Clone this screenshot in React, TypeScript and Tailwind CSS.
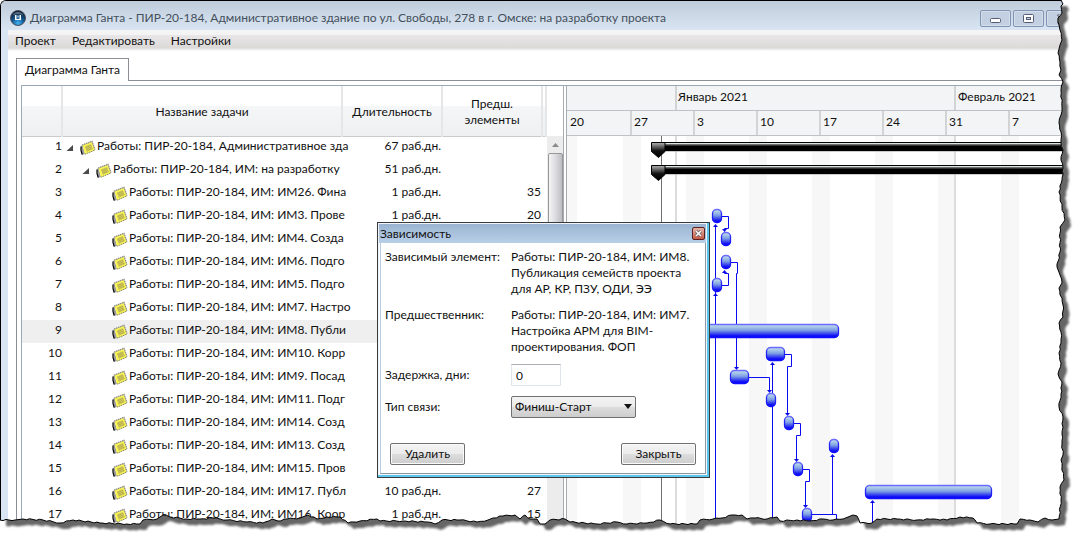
import { useId } from "react";

type Task = {
  id: number;
  name: string;
  level: number;
  duration?: string;
  predecessors?: string;
};

const tasks: Task[] = [
  { id: 1, level: 0, name: "Работы: ПИР-20-184, Административное зда", duration: "67 раб.дн." },
  { id: 2, level: 1, name: "Работы: ПИР-20-184, ИМ: на разработку", duration: "51 раб.дн." },
  { id: 3, level: 2, name: "Работы: ПИР-20-184, ИМ: ИМ26. Фина", duration: "1 раб.дн.", predecessors: "35" },
  { id: 4, level: 2, name: "Работы: ПИР-20-184, ИМ: ИМ3. Прове", duration: "1 раб.дн.", predecessors: "20" },
  { id: 5, level: 2, name: "Работы: ПИР-20-184, ИМ: ИМ4. Созда" },
  { id: 6, level: 2, name: "Работы: ПИР-20-184, ИМ: ИМ6. Подго" },
  { id: 7, level: 2, name: "Работы: ПИР-20-184, ИМ: ИМ5. Подго" },
  { id: 8, level: 2, name: "Работы: ПИР-20-184, ИМ: ИМ7. Настро" },
  { id: 9, level: 2, name: "Работы: ПИР-20-184, ИМ: ИМ8. Публи" },
  { id: 10, level: 2, name: "Работы: ПИР-20-184, ИМ: ИМ10. Корр" },
  { id: 11, level: 2, name: "Работы: ПИР-20-184, ИМ: ИМ9. Посад" },
  { id: 12, level: 2, name: "Работы: ПИР-20-184, ИМ: ИМ11. Подг" },
  { id: 13, level: 2, name: "Работы: ПИР-20-184, ИМ: ИМ14. Созд" },
  { id: 14, level: 2, name: "Работы: ПИР-20-184, ИМ: ИМ13. Созд" },
  { id: 15, level: 2, name: "Работы: ПИР-20-184, ИМ: ИМ15. Пров" },
  { id: 16, level: 2, name: "Работы: ПИР-20-184, ИМ: ИМ17. Публ", duration: "10 раб.дн.", predecessors: "27" },
  { id: 17, level: 2, name: "Работы: ПИР-20-184, ИМ: ИМ16. Коор", duration: "1 раб.дн.", predecessors: "15" },
];

const SELECTED_TASK = 9;
const ROW = 23;

const indent = ["pl-1", "pl-5", "pl-9"];

const weeks = ["20", "27", "3", "10", "17", "24", "31", "7"];

// [row, x, width] in chart coordinates
const bars = [
  [4, 145, 9],
  [5, 154, 9],
  [6, 154, 9],
  [7, 145, 9],
  [9, 118, 153],
  [10, 199, 18],
  [11, 163, 18],
  [12, 199, 9],
  [13, 217, 9],
  [14, 262, 9],
  [15, 226, 9],
  [16, 298, 126],
  [17, 235, 9],
];

const links = [
  "M154 80.5h7.5v12h-4v3",
  "M148.5 89v298",
  "M154 149.5h7.5v-12h-4v-2",
  "M163 126.5h7.5v11h-1v95",
  "M181 241.5h21.5v14",
  "M205.5 387v-160",
  "M217 218.5h7.5v12h-4v48",
  "M226 287.5h7.5v12h-4v25",
  "M235 333.5h7.5v12h-4v25",
  "M244 378.5h25.5v8",
  "M265.5 378v-59",
  "M305.5 387v-22",
];

// [x, y] of the arrow tips
const arrowsDown = [[157.5, 96], [169.5, 234], [202.5, 257], [220.5, 280], [229.5, 326], [238.5, 372]];
const arrowsUp = [[148.5, 88], [148.5, 157], [157.5, 134], [205.5, 226], [265.5, 318], [305.5, 364]];

const rightEdge = [
  [1061, 0], [1063, 4], [1061, 6], [1062, 13], [1058, 18], [1059, 25], [1060, 30], [1062, 40], [1060, 45], [1058, 53],
  [1060, 62], [1061, 70], [1059, 75], [1063, 82], [1061, 90], [1062, 107], [1061, 115], [1059, 123], [1061, 132],
  [1061, 143], [1063, 150], [1061, 160], [1063, 168], [1062, 180], [1059, 192], [1062, 207], [1065, 220], [1060, 227],
  [1060, 252], [1057, 267], [1060, 275], [1062, 283], [1059, 288], [1063, 305], [1063, 317], [1059, 323], [1061, 332],
  [1061, 343], [1059, 353], [1061, 363], [1058, 374], [1062, 382], [1061, 394], [1059, 407], [1063, 417], [1062, 434],
  [1062, 444], [1063, 455], [1061, 460], [1064, 480], [1060, 487], [1061, 500], [1059, 519],
];

const bottomEdge = [
  [1052, 520], [1045, 518], [1038, 522], [1030, 520], [1020, 519], [1017, 524], [990, 524], [977, 523], [973, 518],
  [960, 517], [947, 520], [933, 519], [917, 520], [897, 519], [877, 519], [872, 523], [860, 523], [857, 516], [853, 515],
  [848, 517], [843, 519], [833, 520], [823, 519], [810, 521], [797, 520], [780, 521], [777, 517], [767, 519], [755, 518],
  [747, 519], [742, 515], [732, 515], [722, 518], [713, 519], [700, 520], [697, 524], [670, 524], [660, 520], [647, 523],
  [627, 524], [617, 522], [597, 524], [570, 522], [565, 519], [550, 520], [545, 524], [540, 524], [537, 519], [530, 519],
  [525, 515], [520, 519], [515, 515], [503, 516], [493, 518], [488, 520], [477, 522], [460, 520], [442, 520], [435, 524],
  [427, 522], [403, 521], [380, 521], [377, 519], [360, 521], [348, 523], [340, 517], [327, 517], [317, 519], [308, 515],
  [300, 518], [287, 519], [278, 521], [272, 519], [263, 523], [247, 522], [227, 520], [213, 518], [200, 519], [187, 519],
  [170, 517], [163, 515], [157, 519], [143, 520], [140, 524], [127, 524], [100, 523], [73, 520], [60, 523], [43, 520],
  [23, 519], [15, 520], [0, 520],
];

// Adds small teeth between the points of a torn edge
const roughen = (points: number[][], vertical: boolean) => {
  const out: number[][] = [];
  points.forEach(([x, y], i) => {
    out.push([x, y]);
    const next = points[i + 1];
    if (!next) return;
    const steps = Math.floor(Math.hypot(next[0] - x, next[1] - y) / 3);
    for (let k = 1; k < steps; k++) {
      const t = k / steps;
      const tooth = (((i * 7 + k * 5) % 3) - 1) * 0.6;
      out.push([
        x + (next[0] - x) * t + (vertical ? tooth : 0),
        y + (next[1] - y) * t + (vertical ? 0 : tooth),
      ]);
    }
  });
  return out;
};

const torn = [...roughen(rightEdge, true), ...roughen(bottomEdge, false)].map((p) => p.join(" ")).join("L");

const TornEdge = () => {
  const id = useId();
  const outside = `M0 537H1077V0H1061L${torn}Z`;
  return (
    <svg
      className="pointer-events-none absolute inset-0 z-20 h-full w-full"
      viewBox="0 0 1077 537"
      preserveAspectRatio="none"
      aria-hidden="true"
    >
      <defs>
        <clipPath id={`${id}-out`}>
          <path d={outside} />
        </clipPath>
        <filter id={`${id}-soft`}>
          <feGaussianBlur stdDeviation="1.2" />
        </filter>
      </defs>
      <path d={outside} fill="#fff" />
      <g clipPath={`url(#${id}-out)`}>
        <path
          d={`M2 2L${torn}Z`}
          transform="translate(6 6)"
          fill="#666"
          filter={`url(#${id}-soft)`}
        />
      </g>
      <path d={`M${torn}`} fill="none" stroke="#000" />
    </svg>
  );
};

const AppIcon = () => (
  <svg className="h-4 w-4 shrink-0" viewBox="0 0 16 16" aria-hidden="true">
    <defs>
      <radialGradient id="appIcon" cx="50%" cy="85%" r="80%">
        <stop offset="0" stopColor="#3fb4f5" />
        <stop offset="0.5" stopColor="#15558f" />
        <stop offset="1" stopColor="#0a1a2e" />
      </radialGradient>
    </defs>
    <circle cx="8" cy="8" r="7.5" fill="url(#appIcon)" stroke="#4a5260" />
    <path d="M2.5 5.5a6 6 0 0 1 11 0 12 12 0 0 0-11 0z" fill="#8b98a8" opacity="0.6" />
    <path d="M5 5h1.500v5H5zM9.500 5H11v5H9.500zM5 9h6v1H5zM7.500 5.500h1v2h-1z" fill="#fff" />
  </svg>
);

const NoteIcon = () => (
  <svg className="h-4 w-4 shrink-0" viewBox="0 0 16 16" aria-hidden="true">
    <path d="M1 6L2.500 5 5 14 2 15z" fill="#9a9a9a" />
    <path d="M1 6.500v4l1.200 4" fill="none" stroke="#000" strokeWidth="1.200" />
    <path d="M2.500 5L12 1.500 15 9.800 5 14z" fill="#fbf650" />
    <path d="M2 5.200L12 1.300 15 9.800" fill="none" stroke="#8f8f8f" strokeWidth="1.300" strokeDasharray="1.600 .5" />
    <path d="M4.800 6.400L10.800 4.100 12.800 9.200 6.600 11.700z" fill="#cfc85a" />
    <path d="M5.500 7.500l5.600-2.200M6.200 9l5.600-2.200M6.800 10.500l5.600-2.200" stroke="#b0a94a" strokeWidth=".7" />
    <path d="M5 14.200l10-4.200" stroke="#8c8c54" strokeDasharray="1.600 .5" />
  </svg>
);

const windowButton =
  "flex h-[17px] w-[31px] items-center justify-center rounded-xs border border-[#8294b3] bg-[#c3d0e1] shadow-[inset_0_0_0_1px_#d3deea]";

const TitleBar = () => (
  <header className="flex h-[29px] shrink-0 items-start bg-linear-to-b from-[#bfccdb] to-[#d9e5f2]">
    <div className="flex h-full flex-1 items-center gap-1 pt-[5px] pl-[9px]">
      <AppIcon />
      <h1 className="whitespace-nowrap text-[#44505c]">
        Диаграмма Ганта - ПИР-20-184, Административное здание по ул. Свободы, 278 в г. Омске: на разработку проекта
      </h1>
    </div>
    <div className="flex gap-[2px] pt-[9px]">
      <button aria-label="Свернуть" className={windowButton}>
        <svg width="11" height="9" viewBox="0 0 11 9">
          <rect x=".5" y="4.500" width="10" height="4" rx="1" fill="#fff" stroke="#555c74" />
        </svg>
      </button>
      <button aria-label="Развернуть" className={windowButton}>
        <svg width="11" height="9" viewBox="0 0 11 9">
          <rect x=".5" y=".5" width="10" height="8" rx="1" fill="#fff" stroke="#555c74" />
          <rect x="3.500" y="3.500" width="4" height="2" fill="#c3d0e1" stroke="#555c74" />
        </svg>
      </button>
      <button aria-label="Закрыть окно" className={windowButton}>
        <svg width="12" height="10" viewBox="0 0 12 10">
          <path d="M1.500 1h3L6 3l1.500-2h3L8 5l2.500 4h-3L6 7 4.500 9h-3L4 5z" fill="#fff" stroke="#555c74" />
        </svg>
      </button>
    </div>
  </header>
);

const MenuBar = () => (
  <nav className="flex h-[21px] shrink-0 items-center gap-4 bg-[linear-gradient(#f5f5f6_0,#f3f3f4_5px,#e8e6e8_5px,#dcdad8_18px,#fff_21px)] pt-px pl-[7px]">
    <button>Проект</button>
    <button>Редактировать</button>
    <button>Настройки</button>
  </nav>
);

const headCell =
  "h-[50px] border-r-2 border-b border-r-[#e4e6e8] border-b-[#c9cbcd] bg-[linear-gradient(#fff_20px,#f5f6f8_20px,#eff0f2)] p-0 pt-[3px] text-center font-normal align-middle";

const TaskTable = () => (
  <table className="w-[524px] table-fixed border-collapse self-start">
    <colgroup>
      <col className="w-10" />
      <col className="w-[280px]" />
      <col className="w-[100px]" />
      <col className="w-[100px]" />
      <col className="w-1" />
    </colgroup>
    <thead>
      <tr>
        <th className={headCell} aria-label="Номер" />
        <th className={headCell}>Название задачи</th>
        <th className={headCell}>Длительность</th>
        <th className={headCell}>
          Предш.
          <br />
          элементы
        </th>
        <th className={headCell + " border-r-0"} aria-hidden="true" />
      </tr>
    </thead>
    <tbody>
      {tasks.map((task) => (
        <tr key={task.id} className={task.id === SELECTED_TASK ? "h-[23px] bg-[#efefef]" : "h-[23px]"}>
          <td className="p-0 pb-1 text-right">{task.id}</td>
          <td className="p-0">
            <div className={"flex items-center " + indent[task.level]}>
              <span className="flex w-[14px] shrink-0">
                {task.level < 2 && (
                  <svg width="8" height="8" viewBox="0 0 8 8" aria-hidden="true">
                    <path d="M7 1v6H.5z" fill="#4a4a4a" />
                  </svg>
                )}
              </span>
              <NoteIcon />
              <span className="ml-px pb-1 whitespace-nowrap">{task.name}</span>
            </div>
          </td>
          <td className="p-0 pr-px pb-1 text-right">{task.duration}</td>
          <td className="p-0 pr-px pb-1 text-right">{task.predecessors}</td>
          <td />
        </tr>
      ))}
    </tbody>
  </table>
);

const ScrollBar = () => (
  <div className="mt-[50px] flex w-4 shrink-0 flex-col items-center bg-[#ececec]">
    <button aria-label="Вверх" className="flex h-[17px] w-full items-center justify-center">
      <svg width="7" height="4" viewBox="0 0 7 4">
        <path d="M3.500 0L7 4H0z" fill="#8a8a8a" />
      </svg>
    </button>
    <div className="h-36 w-[15px] rounded-xs border border-[#979797] bg-linear-to-r from-[#f4f4f4] via-[#dcdce0] to-[#bcbcc2]" />
  </div>
);

const TimeHeader = () => (
  <div className="bg-[#f3f4f6]">
    <div className="flex h-[25px] items-center border-b border-[#bfc1c4] whitespace-nowrap">
      <div className="h-full w-[110px] shrink-0 border-r-2 border-[#d2d3d5]" />
      <div className="flex h-full w-[279px] shrink-0 items-center border-r-2 border-[#d2d3d5] pb-[3px] pl-px">
        Январь 2021
      </div>
      <div className="pb-[3px] pl-[2px]">Февраль 2021</div>
    </div>
    <div className="flex h-[25px] border-b border-[#bfc1c4]">
      {weeks.map((week, i) => (
        <div
          key={week}
          className={
            i === 0
              ? "flex w-[65px] shrink-0 items-center border-r-2 border-[#d2d3d5] pb-[3px] pl-[3px]"
              : "flex w-[63px] shrink-0 items-center border-r-2 border-[#d2d3d5] pb-[3px] pl-[2px] last:border-r-0"
          }
        >
          {week}
        </div>
      ))}
    </div>
  </div>
);

const SummaryBar = ({ row }: { row: number }) => {
  const y = (row - 1) * ROW + 6;
  return (
    <g>
      <rect x="90" y={y} width="420" height="9" fill="#000" />
      <rect x="98" y={y + 1} width="412" height="1" fill="#d9e4dc" />
      <rect x="98" y={y + 2} width="412" height="1" fill="#6e6e6e" />
      <rect x="98" y={y + 3} width="412" height="1" fill="#333" />
      <rect x="98" y={y + 9} width="412" height="1" fill="#999" opacity="0.500" />
      <path d={`M84.500 ${y + 0.5}h13.500v9l-6.500 6-7-6z`} fill="url(#summary)" stroke="#000" />
    </g>
  );
};

const Chart = () => (
  <svg width="510" height="400" viewBox="0 0 510 400" className="block" role="img" aria-label="Диаграмма">
    <defs>
      <linearGradient id="bar" x1="0" y1="0" x2="0" y2="1">
        <stop offset="0" stopColor="#c6e4ea" />
        <stop offset="0.450" stopColor="#7d9fe4" />
        <stop offset="0.850" stopColor="#1414f4" />
        <stop offset="1" stopColor="#0000ff" />
      </linearGradient>
      <linearGradient id="barEdge" x1="0" y1="0" x2="0" y2="1">
        <stop offset="0" stopColor="#6b6bff" />
        <stop offset="0.300" stopColor="#2c2cf5" />
        <stop offset="1" stopColor="#1010ff" />
      </linearGradient>
      <linearGradient id="summary" x1="0" y1="0" x2="0" y2="1">
        <stop offset="0" stopColor="#b5b5b5" />
        <stop offset="0.550" stopColor="#111" />
        <stop offset="1" stopColor="#000" />
      </linearGradient>
    </defs>
    <rect x="0" y="0" width="10" height="400" fill="#f7f7f7" />
    {[56, 119, 182, 245, 308, 371, 434].map((x) => (
      <rect key={x} x={x} y="0" width="18" height="400" fill="#f7f7f7" />
    ))}
    <rect x="94" y="0" width="1" height="400" fill="#707070" />
    <rect x="108" y="0" width="2" height="400" fill="#dcdcdc" />
    <rect x="387" y="0" width="2" height="400" fill="#dcdcdc" />
    <g fill="none" stroke="#0a0af0">
      {links.map((d) => (
        <path key={d} d={d} />
      ))}
    </g>
    <g fill="#0a0ae6">
      {arrowsDown.map(([x, y]) => (
        <path key={`${x}-${y}`} d={`M${x - 2.5} ${y - 3}h5l-2.500 3z`} />
      ))}
      {arrowsUp.map(([x, y]) => (
        <path key={`${x}-${y}`} d={`M${x - 2.5} ${y + 3}h5l-2.500-3z`} />
      ))}
    </g>
    {bars.map(([row, x, width]) => (
      <rect
        key={row}
        x={x + 0.5}
        y={(row - 1) * ROW + 4.5}
        width={width}
        height="13"
        rx="4"
        fill="url(#bar)"
        stroke="url(#barEdge)"
        strokeWidth="1.300"
      />
    ))}
    <SummaryBar row={1} />
    <SummaryBar row={2} />
  </svg>
);

const dialogButton =
  "h-[22px] w-[75px] rounded-xs border border-[#707070] bg-[linear-gradient(#f3f3f3_0,#ebebeb_50%,#dddddd_50%,#cdcdcd)] leading-4 shadow-[inset_0_0_0_1px_#fafafa]";

const DependencyDialog = () => (
  <div
    role="dialog"
    aria-labelledby="dialog-title"
    className="absolute top-[222px] left-[377px] z-10 w-[333px] border border-[#3a3a3a] bg-[#5cc6ec] pr-[2px] pb-[2px]"
  >
    <div className="border border-[#eef4fa] bg-white">
      <div className="flex h-[19px] items-center justify-between bg-linear-to-b from-[#9ab4d1] to-[#b9cfe8] pr-px pl-px">
        <h2 id="dialog-title">Зависимость</h2>
        <button
          aria-label="Закрыть диалог"
          className="flex h-[13px] w-[13px] items-center justify-center rounded-xs border border-[#5a2020] bg-linear-to-b from-[#e6b4a8] to-[#c65a48]"
        >
          <svg width="7" height="7" viewBox="0 0 7 7">
            <path d="M1 1l5 5M6 1L1 6" stroke="#555" strokeWidth="2.800" />
            <path d="M1 1l5 5M6 1L1 6" stroke="#fff" strokeWidth="1.600" />
          </svg>
        </button>
      </div>
      <form className="ml-px border border-t-0 border-[#8a97a6] border-l-[#b6cbe3] pt-[6px] pb-2 pl-1">
        <dl className="grid grid-cols-[126px_1fr] gap-y-[10px] leading-4">
          <dt>Зависимый элемент:</dt>
          <dd>
            Работы: ПИР-20-184, ИМ: ИМ8.
            <br />
            Публикация семейств проекта
            <br />
            для АР, КР, ПЗУ, ОДИ, ЭЭ
          </dd>
          <dt>Предшественник:</dt>
          <dd>
            Работы: ПИР-20-184, ИМ: ИМ7.
            <br />
            Настройка АРМ для BIM-
            <br />
            проектирования. ФОП
          </dd>
        </dl>
        <div className="mt-[9px] grid grid-cols-[126px_1fr] items-center gap-y-[10px]">
          <label htmlFor="lag">Задержка, дни:</label>
          <input id="lag" defaultValue="0" className="h-[22px] w-[50px] border border-[#e0e4ec] border-t-[#abadb3] px-1" />
          <label htmlFor="link-type">Тип связи:</label>
          <div className="relative w-[125px]">
            <select
              id="link-type"
              className="block h-[22px] w-full appearance-none rounded-xs border border-[#707070] bg-[linear-gradient(#f3f3f3_0,#ebebeb_50%,#dddddd_50%,#cdcdcd)] pl-[3px]"
            >
              <option>Финиш-Старт</option>
            </select>
            <svg className="pointer-events-none absolute top-2 right-1" width="8" height="5" viewBox="0 0 8 5">
              <path d="M0 0h8L4 5z" fill="#111" />
            </svg>
          </div>
        </div>
        <div className="mt-[25px] flex justify-between pr-[9px] pl-[5px]">
          <button type="button" className={dialogButton}>
            Удалить
          </button>
          <button type="button" className={dialogButton}>
            Закрыть
          </button>
        </div>
      </form>
    </div>
  </div>
);

export default function App() {
  return (
    <div className="relative h-screen overflow-hidden bg-white font-[Lato,'Open_Sans',sans-serif] text-xs text-[#111]">
      <div className="flex h-full flex-col overflow-hidden rounded-tl-md border-t border-l border-black bg-[#d9e5f2]">
        <TitleBar />
        <div className="ml-[7px] flex min-h-0 flex-1 flex-col bg-white">
          <MenuBar />
          <main className="mt-[7px] ml-2 flex min-h-0 flex-1 flex-col">
            <div className="flex shrink-0">
              <button className="h-[23px] w-[113px] border border-b-0 border-[#8c8e94] bg-white">
                Диаграмма Ганта
              </button>
              <div className="flex-1 border-b border-[#8c8e94]" />
            </div>
            <div className="flex min-h-0 flex-1 border-l border-[#8c8e94] pt-1 pl-1">
              <div className="flex min-h-0 flex-1 overflow-hidden border-t border-l border-[#9aa8b6]">
                <TaskTable />
                <ScrollBar />
                <div className="w-1 shrink-0 border-r border-l border-[#a8acb0] bg-white" />
                <div className="min-w-0 flex-1 overflow-hidden">
                  <TimeHeader />
                  <Chart />
                </div>
              </div>
            </div>
          </main>
        </div>
      </div>
      <DependencyDialog />
      <TornEdge />
    </div>
  );
}
